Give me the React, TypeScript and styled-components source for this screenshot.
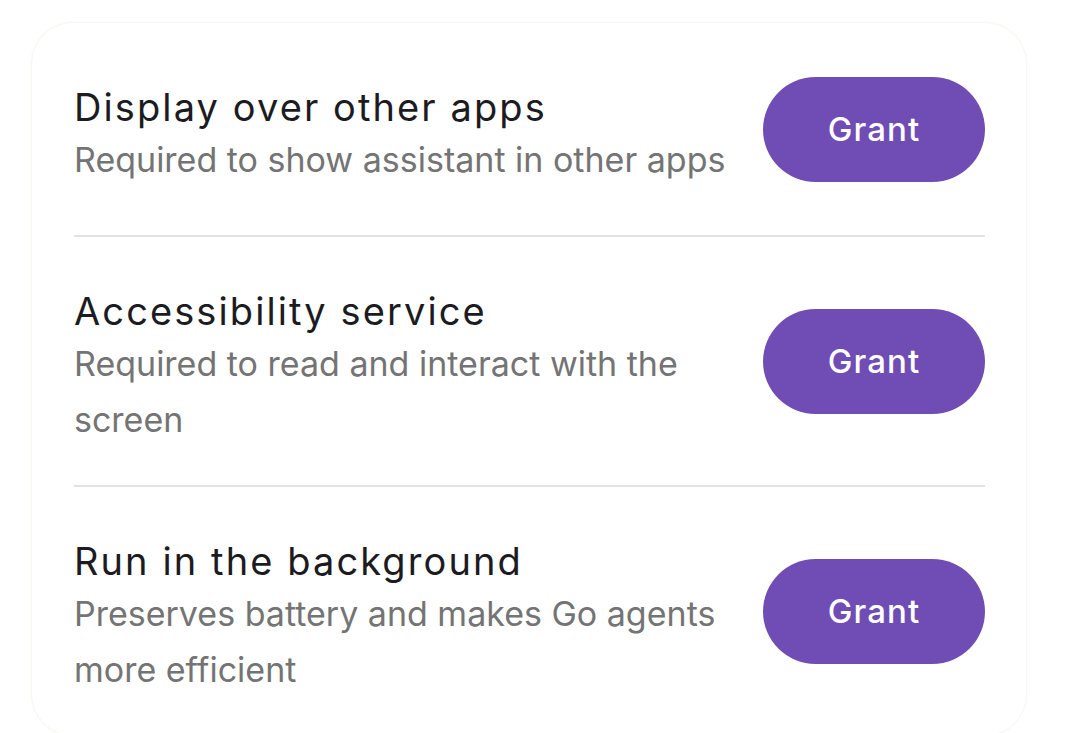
import React from 'react'
import styled, { createGlobalStyle } from 'styled-components'

const GlobalStyle = createGlobalStyle`
  html, body {
    margin: 0;
    padding: 0;
    background: #ffffff;
  }
  body {
    font-family: "Inter", "Roboto", sans-serif;
    -webkit-font-smoothing: antialiased;
  }
`

const Page = styled.div`
  width: 1067px;
  height: 733px;
  overflow: hidden;
  padding: 22px 40px 0 31px;
  box-sizing: border-box;
`

const Card = styled.div`
  background: #ffffff;
  border: 1px solid #f8f7f2;
  border-radius: 42px;
  padding: 0 41px 0 42px;
  box-shadow: 0 0 2px rgba(235, 233, 220, 0.3);
`

const Row = styled.div`
  display: flex;
  align-items: center;
  gap: 32px;
  min-height: 212px;
  padding: 37px 0;
  box-sizing: border-box;
  & + & {
    border-top: 2px solid #e2e2e0;
  }
`

const TextCol = styled.div`
  flex: 1;
  min-width: 0;
  padding-top: 12px;
`

const Title = styled.div`
  font-size: 38px;
  line-height: 50px;
  letter-spacing: 2.1px;
  color: #1c1b1f;
  font-weight: 400;
`

const Subtitle = styled.div`
  font-size: 34px;
  line-height: 56px;
  color: #747474;
`

const GrantButton = styled.button`
  flex: none;
  width: 222px;
  height: 105px;
  border: none;
  border-radius: 53px;
  background: #6f4db4;
  color: #ffffff;
  font-family: "Inter", "Roboto", sans-serif;
  font-size: 33px;
  font-weight: 500;
  letter-spacing: 1.1px;
  cursor: pointer;
`

const permissions = [
  { title: 'Display over other apps', desc: 'Required to show assistant in other apps' },
  { title: 'Accessibility service', desc: 'Required to read and interact with the screen' },
  { title: 'Run in the background', desc: 'Preserves battery and makes Go agents more efficient' },
]

const App: React.FC = () => {
  return (
    <>
      <GlobalStyle />
      <Page>
        <Card>
          {permissions.map((p) => (
            <Row key={p.title}>
              <TextCol>
                <Title>{p.title}</Title>
                <Subtitle>{p.desc}</Subtitle>
              </TextCol>
              <GrantButton>Grant</GrantButton>
            </Row>
          ))}
        </Card>
      </Page>
    </>
  )
}

export default App
